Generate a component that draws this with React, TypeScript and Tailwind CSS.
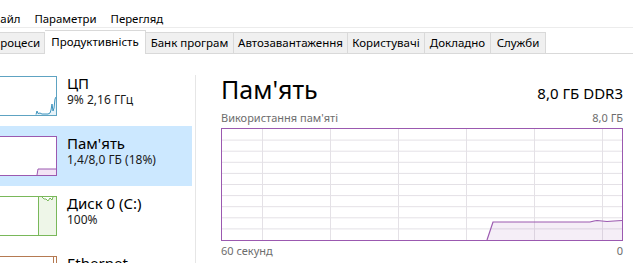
import React from "react";

function Tab({ label, w, active, first }: { label: string; w: string; active?: boolean; first?: boolean }) {
  const base = "flex items-center justify-center text-[11.5px] leading-none border-t border-r border-[#d9d9d9] whitespace-nowrap";
  if (active) {
    return (
      <div className={`${base} ${w} h-[24px] bg-white -mb-px pb-[1px]`}>{label}</div>
    );
  }
  return (
    <div className={`${base} ${w} h-[21px] bg-[#f0f0f0] ${first ? "ml-[-13px] border-l" : ""}`}>{label}</div>
  );
}

function Item({
  title,
  sub,
  selected,
  children,
}: {
  title: string;
  sub: string;
  selected?: boolean;
  children: React.ReactNode;
}) {
  return (
    <div className={`flex h-[60px] w-[192px] items-start ${selected ? "bg-[#cce8ff]" : ""}`}>
      <div className="ml-[-14px] mt-[10px] h-[40px] w-[71px] shrink-0">{children}</div>
      <div className="ml-[10px] flex flex-col">
        <div className="mt-[8px] text-[15px] leading-[18px] text-black whitespace-nowrap">{title}</div>
        <div className="text-[12px] leading-[15px] text-[#1a1a1a] whitespace-nowrap">{sub}</div>
      </div>
    </div>
  );
}

export default function App() {
  const hLines = [1, 2, 3, 4, 5, 6, 7, 8, 9].map((i) => i * 11.1);
  const vLines = [40, 108, 176, 244, 312, 380];
  return (
    <div className="relative h-[263px] w-[633px] overflow-hidden bg-white text-black font-['Noto_Sans',sans-serif]">
      {/* menu bar */}
      <div className="flex h-[28px] items-center gap-[14px] border-b border-[#ececec] pt-[10px] text-[11.4px]">
        <span className="ml-[-9px]">Файл</span>
        <span>Параметри</span>
        <span>Перегляд</span>
      </div>
      {/* tabs */}
      <div className="flex h-[26px] items-end border-b border-[#d9d9d9]">
        <Tab label="Процеси" w="w-[58px]" first />
        <Tab label="Продуктивність" w="w-[101px]" active />
        <Tab label="Банк програм" w="w-[88px]" />
        <Tab label="Автозавантаження" w="w-[114px]" />
        <Tab label="Користувачі" w="w-[77px]" />
        <Tab label="Докладно" w="w-[66px]" />
        <Tab label="Служби" w="w-[55px]" />
      </div>
      {/* content */}
      <div className="flex">
        <div className="w-[195px] shrink-0 pt-[12px]">
          <Item title="ЦП" sub="9% 2,16 ГГц">
            <div className="h-full w-full border border-[#5ea3c2]">
              <svg width="69" height="38" viewBox="0 0 69 38" className="block">
                <polygon
                  points="0,38 49,38 50,34 51,36.5 53,36 55,37 61,37 63,36 64,33 65,27 66,34 67,31 68,22 69,20 69,38"
                  fill="#e6f2f8"
                />
                <polyline
                  points="49,37.5 50,34 51,36.5 53,36 55,37 61,37 63,36 64,33 65,27 66,34 67,31 68,22 69,20"
                  fill="none"
                  stroke="#3d93bd"
                  strokeWidth="1"
                />
              </svg>
            </div>
          </Item>
          <Item title="Пам'ять" sub="1,4/8,0 ГБ (18%)" selected>
            <div className="h-full w-full border border-[#9b59b0] bg-white">
              <svg width="69" height="38" viewBox="0 0 69 38" className="block">
                <polygon points="50,38 51,32 69,32 69,38" fill="#f3e4f5" />
                <polyline points="50,38 51,32 69,32" fill="none" stroke="#9b59b0" strokeWidth="1" />
              </svg>
            </div>
          </Item>
          <Item title="Диск 0 (C:)" sub="100%">
            <div className="h-full w-full border border-[#79b85a]">
              <svg width="69" height="38" viewBox="0 0 69 38" className="block">
                <polygon points="51,0 51,38 69,38 69,0 66,0 65,3 63,1 61,4 59,2 57,2 55,0" fill="#eef6e8" />
                <line x1="51.5" y1="0" x2="51.5" y2="38" stroke="#79b85a" strokeWidth="1" />
                <polyline points="55,0 57,2 59,2 61,4 63,1 65,3 66,0" fill="none" stroke="#79b85a" strokeWidth="1" />
              </svg>
            </div>
          </Item>
          <Item title="Ethernet" sub="">
            <div className="h-full w-full border border-[#b57a52]">
              <svg width="69" height="38" viewBox="0 0 69 38" className="block">
                <line x1="66.5" y1="0" x2="66.5" y2="38" stroke="#b57a52" strokeWidth="1" />
              </svg>
            </div>
          </Item>
        </div>
        <div className="mt-[21px] h-[200px] w-px shrink-0 bg-[#e6e6e6]" />
        <div className="w-[427px] shrink-0 pl-[25px]">
          <div className="mt-[19px] flex h-[32px] items-baseline justify-between">
            <span className="text-[25px] leading-[32px]">Пам'ять</span>
            <span className="text-[15px] leading-[20px]">8,0 ГБ DDR3</span>
          </div>
          <div className="mt-[6px] flex h-[14px] justify-between text-[11px] leading-[14px] text-[#6d6d6d]">
            <span>Використання пам'яті</span>
            <span>8,0 ГБ</span>
          </div>
          <div className="mt-[3px] h-[113px] w-[402px] border border-[#9b59b0]">
            <svg width="400" height="111" viewBox="0 0 400 111" className="block">
              {hLines.map((y) => (
                <line key={`h${y}`} x1="0" x2="400" y1={y} y2={y} stroke="#e4e1e6" strokeWidth="1" />
              ))}
              {vLines.map((x) => (
                <line key={`v${x}`} x1={x + 0.5} x2={x + 0.5} y1="0" y2="111" stroke="#e4e1e6" strokeWidth="1" />
              ))}
              <polygon
                points="265,111 271,93 368,93 372,92 375,91.5 380,92 385,92.5 392,92 400,91.5 400,111"
                fill="#9b59b0"
                fillOpacity="0.1"
              />
              <polyline
                points="265,111 271,93 368,93 372,92 375,91.5 380,92 385,92.5 392,92 400,91.5"
                fill="none"
                stroke="#9b59b0"
                strokeWidth="1.2"
              />
            </svg>
          </div>
          <div className="mt-[3px] flex justify-between text-[11px] leading-[14px] text-[#6d6d6d]">
            <span>60 секунд</span>
            <span>0</span>
          </div>
        </div>
      </div>
    </div>
  );
}
